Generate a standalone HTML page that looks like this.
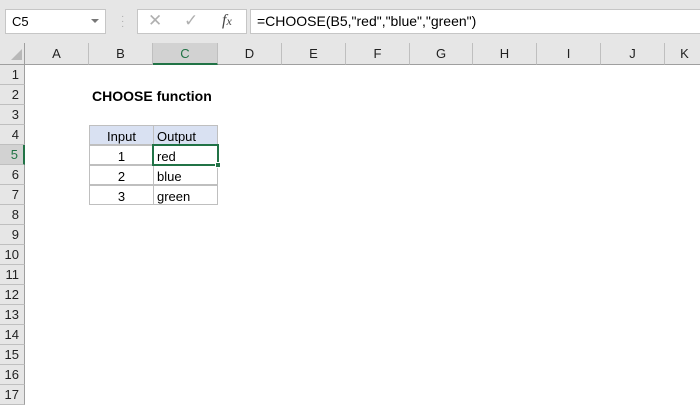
<!DOCTYPE html>
<html><head><style>
*{margin:0;padding:0;box-sizing:border-box}
body{width:700px;height:400px;overflow:hidden;background:#fff;font-family:"Liberation Sans",sans-serif;position:relative}
.a{position:absolute}
.tb{left:0;top:0;width:700px;height:43px;background:#e6e6e6}
.ch{top:43px;height:22px;background:#e6e6e6;border-right:1px solid #bfbfbf;border-bottom:1px solid #9f9f9f;font-size:13px;text-align:center;line-height:21px;color:#222}
.rh{left:0;width:25px;height:20px;background:#e6e6e6;border-bottom:1px solid #bfbfbf;border-right:1px solid #9f9f9f;font-size:13px;text-align:right;padding-right:5px;line-height:20px;color:#222}
.c{height:20px;font-size:13px;line-height:21px;border:1px solid #bfbfbf;margin:-1px 0 0 -1px;color:#000}
</style></head><body>
<div class="a tb"></div>
<div class="a" style="left:5px;top:9px;width:101px;height:25px;background:#fff;border:1px solid #c6c6c6;font-size:13px;line-height:23px;padding-left:6px">C5</div>
<div class="a" style="left:91px;top:19px;width:0;height:0;border-left:4px solid transparent;border-right:4px solid transparent;border-top:4px solid #777"></div>
<div class="a" style="left:121px;top:14px;color:#aaa;font-size:10px;line-height:5px">·<br>·<br>·</div>
<div class="a" style="left:137px;top:9px;width:110px;height:25px;background:#fff;border:1px solid #c6c6c6"></div>
<div class="a" style="left:148px;top:11px;color:#b0b0b0;font-size:17px">✕</div>
<div class="a" style="left:184px;top:11px;color:#b0b0b0;font-size:17px">✓</div>
<div class="a" style="left:222px;top:12px;color:#444;font-size:16px;font-style:italic;font-family:'Liberation Serif',serif">f<span style="font-size:12px">x</span></div>
<div class="a" style="left:250px;top:9px;width:450px;height:25px;background:#fff;border:1px solid #c6c6c6;border-right:none;font-size:14px;line-height:23px;padding-left:6px">=CHOOSE(B5,"red","blue","green")</div>
<div class="a" style="left:0;top:43px;width:25px;height:22px;background:#e6e6e6;border-right:1px solid #9f9f9f;border-bottom:1px solid #9f9f9f"></div>
<div class="a" style="left:11px;top:49px;width:0;height:0;border-left:11px solid transparent;border-bottom:11px solid #b8b8b8"></div>
<div class="a ch" style="left:25px;width:64px">A</div>
<div class="a ch" style="left:89px;width:64px">B</div>
<div class="a ch" style="left:153px;width:65px;background:#d2d2d2;color:#217346;border-bottom:2px solid #217346">C</div>
<div class="a ch" style="left:218px;width:64px">D</div>
<div class="a ch" style="left:282px;width:64px">E</div>
<div class="a ch" style="left:346px;width:64px">F</div>
<div class="a ch" style="left:410px;width:63px">G</div>
<div class="a ch" style="left:473px;width:64px">H</div>
<div class="a ch" style="left:537px;width:64px">I</div>
<div class="a ch" style="left:601px;width:64px">J</div>
<div class="a ch" style="left:665px;width:40px">K</div>
<div class="a rh" style="top:65px">1</div>
<div class="a rh" style="top:85px">2</div>
<div class="a rh" style="top:105px">3</div>
<div class="a rh" style="top:125px">4</div>
<div class="a rh" style="top:145px;background:#d2d2d2;color:#217346;border-right:2px solid #217346">5</div>
<div class="a rh" style="top:165px">6</div>
<div class="a rh" style="top:185px">7</div>
<div class="a rh" style="top:205px">8</div>
<div class="a rh" style="top:225px">9</div>
<div class="a rh" style="top:245px">10</div>
<div class="a rh" style="top:265px">11</div>
<div class="a rh" style="top:285px">12</div>
<div class="a rh" style="top:305px">13</div>
<div class="a rh" style="top:325px">14</div>
<div class="a rh" style="top:345px">15</div>
<div class="a rh" style="top:365px">16</div>
<div class="a rh" style="top:385px">17</div>
<div class="a" style="left:92px;top:88px;font-size:14px;font-weight:bold">CHOOSE function</div>
<div class="a c" style="left:90px;top:126px;width:65px;background:#d9e1f2;text-align:center">Input</div>
<div class="a c" style="left:154px;top:126px;width:65px;background:#d9e1f2;padding-left:3px">Output</div>
<div class="a c" style="left:90px;top:146px;width:65px;text-align:center">1</div>
<div class="a c" style="left:154px;top:146px;width:65px;padding-left:3px">red</div>
<div class="a c" style="left:90px;top:166px;width:65px;text-align:center">2</div>
<div class="a c" style="left:154px;top:166px;width:65px;padding-left:3px">blue</div>
<div class="a c" style="left:90px;top:186px;width:65px;text-align:center">3</div>
<div class="a c" style="left:154px;top:186px;width:65px;padding-left:3px">green</div>
<div class="a" style="left:152px;top:144px;width:67px;height:22px;border:2px solid #217346"></div>
<div class="a" style="left:215px;top:162px;width:6px;height:6px;background:#217346;border:1px solid #fff"></div>
</body></html>
